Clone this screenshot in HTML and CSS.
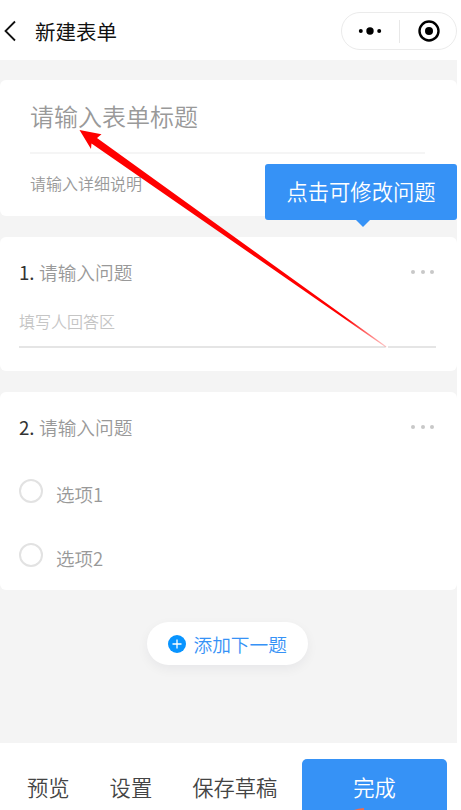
FILE: index.html
```html
<!DOCTYPE html>
<html lang="zh-CN">
<head>
<meta charset="utf-8">
<title>新建表单</title>
<link rel="stylesheet" href="styles.css">
</head>
<body>
<div class="screen">
  <header class="navbar">
    <svg class="back" width="12" height="22" viewBox="0 0 12 22"><path d="M11 1.5 1.5 11 11 20.5" fill="none" stroke="#111" stroke-width="1.8"/></svg>
    <h1>新建表单</h1>
    <div class="capsule">
      <svg width="24" height="10" viewBox="0 0 24 10"><circle cx="2.8" cy="5" r="2"/><circle cx="12" cy="5" r="3.7"/><circle cx="21.2" cy="5" r="2"/></svg>
      <span class="divider"></span>
      <svg width="22" height="22" viewBox="0 0 22 22"><circle cx="11" cy="11" r="9.5" fill="none" stroke="#000" stroke-width="2.4"/><circle cx="11" cy="11" r="4"/></svg>
    </div>
  </header>
  <main>
    <section class="card intro">
      <div class="form-title">请输入表单标题</div>
      <div class="description">请输入详细说明</div>
      <div class="tooltip">点击可修改问题</div>
    </section>
    <section class="card question">
      <div class="heading"><span class="number">1.</span><span class="prompt">请输入问题</span><span class="more"><i></i><i></i><i></i></span></div>
      <div class="answer">填写人回答区</div>
    </section>
    <section class="card choices">
      <div class="heading"><span class="number">2.</span><span class="prompt">请输入问题</span><span class="more"><i></i><i></i><i></i></span></div>
      <div class="option"><span class="radio"></span><span class="label">选项1</span></div>
      <div class="option"><span class="radio"></span><span class="label">选项2</span></div>
    </section>
    <div class="add">
      <svg width="18" height="18" viewBox="0 0 18 18"><circle cx="9" cy="9" r="9" fill="#0894ff"/><path d="M4.5 9h9M9 4.5v9" stroke="#fff" stroke-width="1.3"/></svg>
      <span>添加下一题</span>
    </div>
  </main>
  <footer class="toolbar">
    <span class="action">预览</span>
    <span class="action">设置</span>
    <span class="action">保存草稿</span>
    <span class="done">完成</span>
  </footer>
  <svg class="arrow" width="457" height="810" viewBox="0 0 457 810">
    <defs><linearGradient id="fade" gradientUnits="userSpaceOnUse" x1="345" y1="318" x2="387" y2="347"><stop offset="0" stop-color="#f00"/><stop offset="1" stop-color="#f00" stop-opacity=".2"/></linearGradient></defs>
    <path d="M385.500 345.500h2.500v4h-2.500z" fill="#fff"/>
    <path d="M79.500 130 101.500 134.300 97 138 386.500 346.500 386 347.500 91.500 143.500 91 149z" fill="url(#fade)"/>
    <path d="M354 810Q358 808.500 364 808V810z" fill="#f26b4b"/>
  </svg>
</div>
</body>
</html>
```
FILE: styles.css
```css
* { box-sizing: border-box; }
body {
  margin: 0;
  background: #fff;
  font-family: "Noto Sans CJK SC", sans-serif;
  font-weight: 350;
}
.screen {
  position: relative;
  width: 457px;
  height: 810px;
  overflow: hidden;
  display: flex;
  flex-direction: column;
  background: #f4f4f4;
}
svg { display: block; }
.navbar {
  flex: none;
  height: 60px;
  display: flex;
  align-items: center;
  padding: 2px 0 0 4px;
  background: #fff;
}
h1 {
  margin: 0 auto 0 19px;
  font-size: 20.500px;
  line-height: 30px;
  font-weight: 400;
  color: #111;
}
.capsule {
  width: 116px;
  height: 38px;
  border: 1px solid #ebebeb;
  border-radius: 19px;
  display: flex;
  align-items: center;
  padding-left: 16px;
}
.divider { width: 1px; height: 23px; margin: 0 18px 0 17px; background: #e8e8e8; }
main { flex: 1; padding-top: 20px; }
.card { background: #fff; border-radius: 6px; }
.intro { position: relative; height: 136px; padding: 0 32px 0 30px; }
.form-title {
  height: 74px;
  border-bottom: 2px solid #f5f5f5;
  font-size: 24px;
  line-height: 72px;
  color: #999;
}
.description { font-size: 16px; line-height: 58px; color: #999; }
.tooltip {
  position: absolute;
  left: 265px;
  top: 84px;
  width: 192px;
  height: 56px;
  border-radius: 3px;
  background: #3692f6;
  color: #fff;
  font-size: 21.300px;
  line-height: 53px;
  text-align: center;
}
.tooltip::after {
  content: "";
  position: absolute;
  left: 91px;
  top: 56px;
  border: 7px solid transparent;
  border-top-color: #3692f6;
  border-bottom: 0;
}
.question { height: 134px; margin-top: 21px; padding: 20px 21px 0 19px; }
.heading { height: 30px; display: flex; align-items: center; font-size: 18.700px; line-height: 30px; }
.number { width: 20px; font-family: "Noto Sans CJK SC", sans-serif; font-weight: 400; color: #333; }
.prompt { color: #999; }
.more { display: flex; gap: 5.400px; margin-left: auto; padding-right: 2px; }
.more i { width: 4px; height: 4px; border-radius: 50%; background: #c8c8c8; }
.answer { height: 61px; padding-top: 20px; border-bottom: 2px solid #e5e5e5; font-size: 16px; line-height: 28px; color: #c5c5c5; }
.choices { height: 198px; margin-top: 21.400px; padding: 20px 21px 0 19px; }
.option { height: 24px; margin-top: 37px; display: flex; align-items: center; }
.option + .option { margin-top: 40px; }
.radio { width: 24px; height: 24px; border: 2px solid #e2e2e2; border-radius: 50%; }
.label { margin: 5px 0 0 13px; font-size: 18.500px; line-height: 26px; color: #999; }
.add {
  width: 161px;
  height: 43px;
  margin: 32px 0 0 147px;
  display: flex;
  align-items: center;
  padding-left: 20.500px;
  gap: 8px;
  border-radius: 22px;
  background: #fff;
  box-shadow: 0 4px 12px rgba(0, 20, 50, .055);
  font-size: 18.700px;
  line-height: 28px;
  color: #3692f6;
}
.toolbar {
  flex: none;
  height: 67px;
  display: flex;
  padding-left: 27px;
  background: #fff;
  font-size: 21.300px;
  line-height: 87px;
  color: #444;
  white-space: nowrap;
}
.action { margin-right: 40px; }
.action:nth-child(3) { margin-right: 0; }
.done {
  width: 145px;
  height: 60px;
  margin: 16px 10px 0 auto;
  border-radius: 5px;
  background: #3692f6;
  color: #fff;
  text-align: center;
  line-height: 55px;
}
.arrow { position: absolute; left: 0; top: 0; pointer-events: none; }
```
